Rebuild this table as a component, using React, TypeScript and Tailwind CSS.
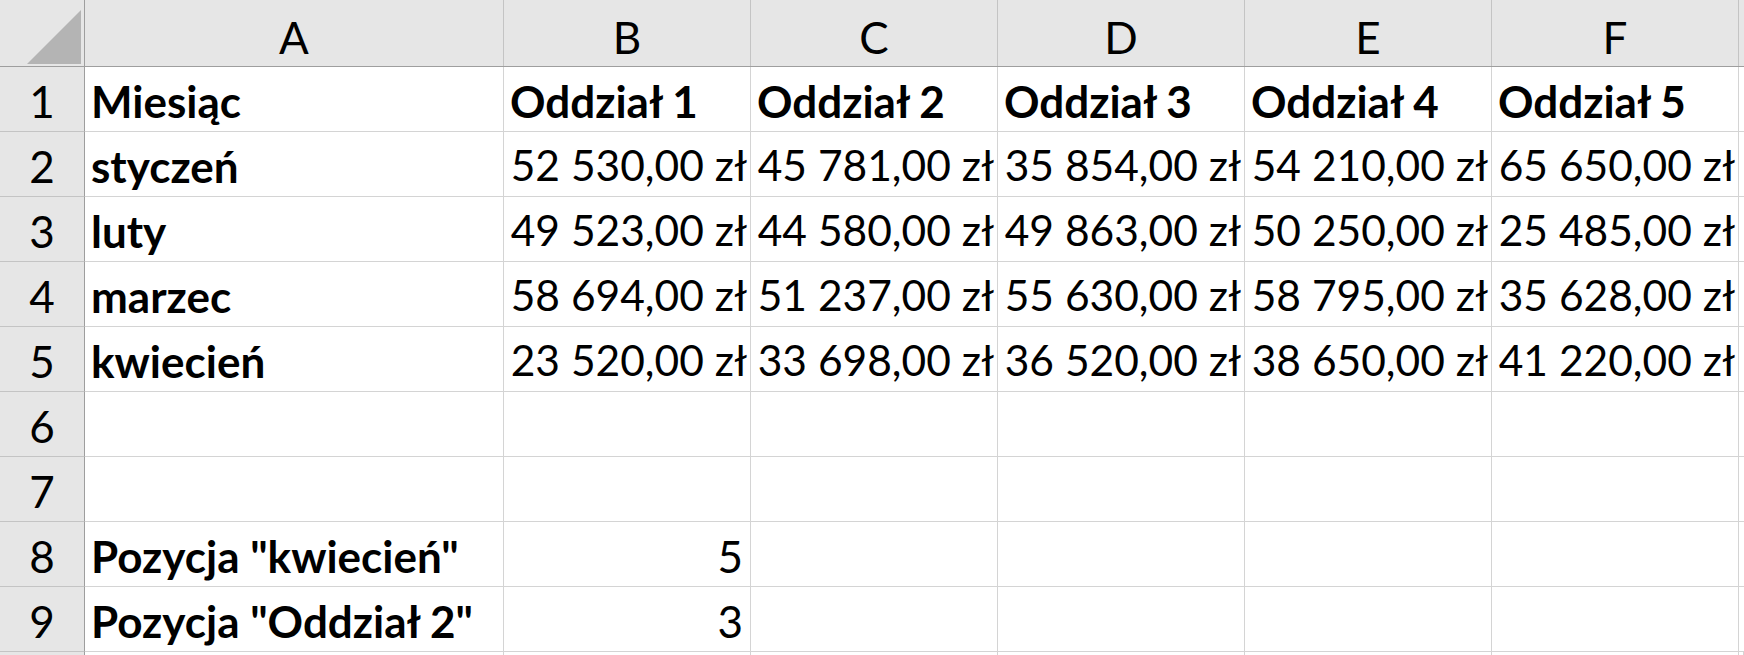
import React from 'react';

const columns = ['A', 'B', 'C', 'D', 'E', 'F'];

type Cell = { text: string; bold?: boolean; align?: 'left' | 'right' };

const rows: Cell[][] = [
  [
    { text: 'Miesiąc', bold: true },
    { text: 'Oddział 1', bold: true },
    { text: 'Oddział 2', bold: true },
    { text: 'Oddział 3', bold: true },
    { text: 'Oddział 4', bold: true },
    { text: 'Oddział 5', bold: true },
  ],
  [
    { text: 'styczeń', bold: true },
    { text: '52 530,00 zł', align: 'right' },
    { text: '45 781,00 zł', align: 'right' },
    { text: '35 854,00 zł', align: 'right' },
    { text: '54 210,00 zł', align: 'right' },
    { text: '65 650,00 zł', align: 'right' },
  ],
  [
    { text: 'luty', bold: true },
    { text: '49 523,00 zł', align: 'right' },
    { text: '44 580,00 zł', align: 'right' },
    { text: '49 863,00 zł', align: 'right' },
    { text: '50 250,00 zł', align: 'right' },
    { text: '25 485,00 zł', align: 'right' },
  ],
  [
    { text: 'marzec', bold: true },
    { text: '58 694,00 zł', align: 'right' },
    { text: '51 237,00 zł', align: 'right' },
    { text: '55 630,00 zł', align: 'right' },
    { text: '58 795,00 zł', align: 'right' },
    { text: '35 628,00 zł', align: 'right' },
  ],
  [
    { text: 'kwiecień', bold: true },
    { text: '23 520,00 zł', align: 'right' },
    { text: '33 698,00 zł', align: 'right' },
    { text: '36 520,00 zł', align: 'right' },
    { text: '38 650,00 zł', align: 'right' },
    { text: '41 220,00 zł', align: 'right' },
  ],
  [],
  [],
  [
    { text: 'Pozycja "kwiecień"', bold: true },
    { text: '5', align: 'right' },
  ],
  [
    { text: 'Pozycja "Oddział 2"', bold: true },
    { text: '3', align: 'right' },
  ],
];

const gridCols = 'grid grid-cols-[85px_419px_247px_247px_247px_247px_247px_1fr]';

export default function App() {
  return (
    <div className="w-[1744px] h-[655px] overflow-hidden bg-white text-black font-['Lato','Liberation_Sans',sans-serif] text-[44px] leading-none">
      {/* Column headers */}
      <div className={`${gridCols} h-[67px] bg-[#e6e6e6] border-b border-[#9e9e9e]`}>
        <div className="flex items-end justify-end pr-[3px] pb-[2px] border-r border-[#9e9e9e]">
          <svg width="54" height="54" viewBox="0 0 54 54">
            <polygon points="54,0 54,54 0,54" fill="#b4b4b4" />
          </svg>
        </div>
        {columns.map((c) => (
          <div key={c} className="flex items-center justify-center pt-[5px] border-r border-[#c4c4c4]">
            <span className="pt-[2px]">{c}</span>
          </div>
        ))}
        <div />
      </div>

      {/* Body rows */}
      {rows.map((row, r) => (
        <div key={r} className={`${gridCols} h-[65px]`}>
          <div className="flex items-center justify-center bg-[#e6e6e6] border-r border-[#9e9e9e] border-b border-b-[#c4c4c4] pt-[3px]">
            {r + 1}
          </div>
          {[0, 1, 2, 3, 4, 5, 6].map((i) => {
            const cell = row[i];
            const isCurrency = cell?.text.includes('zł');
            return (
              <div
                key={i}
                className={`flex items-center whitespace-nowrap border-r border-b border-[#d4d4d4] pt-[3px] ${
                  cell?.align === 'right' ? 'justify-end' : 'justify-start pl-[6px]'
                } ${cell?.align === 'right' ? (isCurrency ? 'pr-[3px] text-[42.5px]' : 'pr-[7px]') : ''} ${
                  cell?.bold ? 'font-bold' : 'font-normal'
                }`}
              >
                {cell?.text ?? ''}
              </div>
            );
          })}
        </div>
      ))}

      {/* Partially visible row 10 */}
      <div className={`${gridCols} h-[65px]`}>
        <div className="bg-[#e6e6e6] border-r border-[#9e9e9e]" />
        {[0, 1, 2, 3, 4, 5, 6].map((i) => (
          <div key={i} className="border-r border-[#d4d4d4]" />
        ))}
      </div>
    </div>
  );
}
